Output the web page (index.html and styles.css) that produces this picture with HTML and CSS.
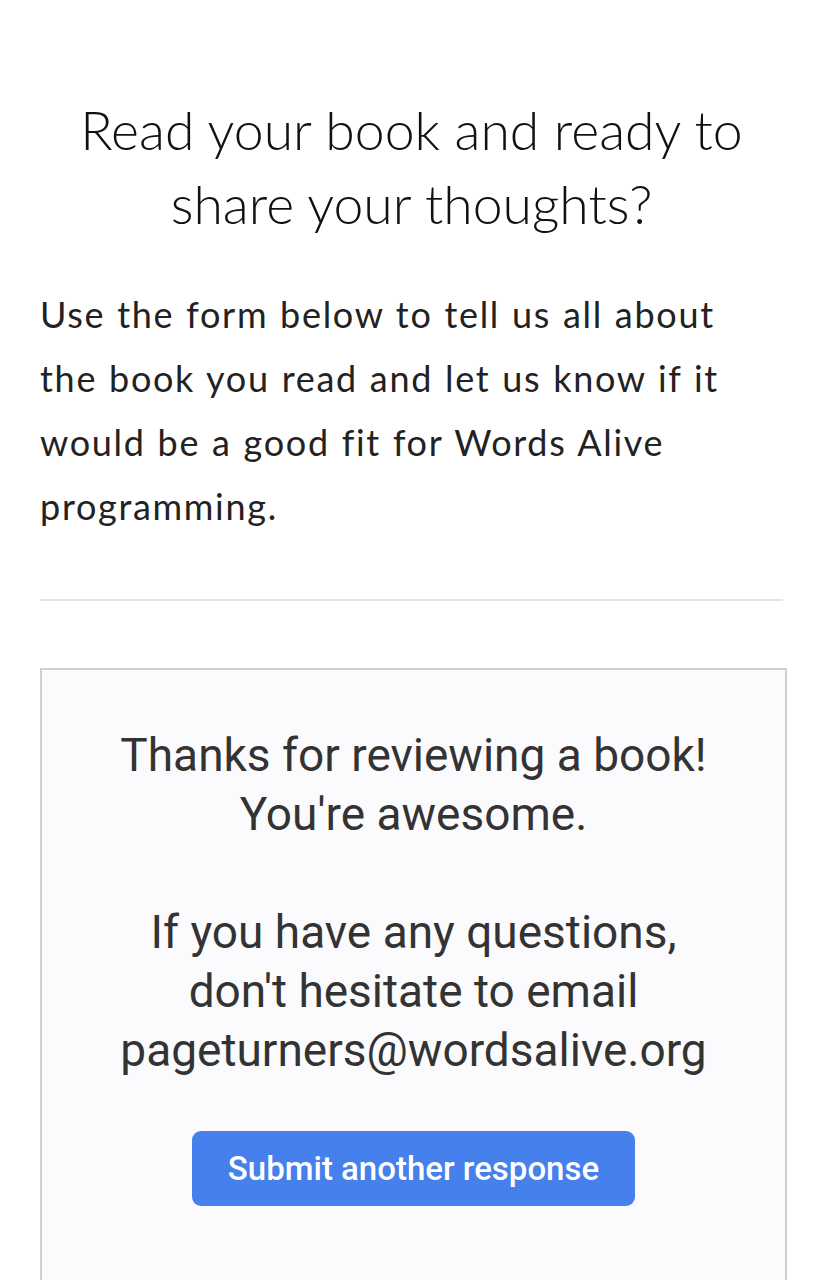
FILE: index.html
```html
<!DOCTYPE html>
<html lang="en">
<head>
<meta charset="utf-8">
<title>Share your thoughts</title>
<link rel="stylesheet" href="styles.css">
</head>
<body>
<main class="page">
  <h1 class="title">Read your book and ready to share your thoughts?</h1>
  <p class="intro">Use the form below to tell us all about the book you read and let us know if it would be a good fit for Words Alive programming.</p>
  <hr class="divider">
  <section class="card">
    <p class="msg">Thanks for reviewing a book!<br>You're awesome.</p>
    <p class="msg">If you have any questions, don't hesitate to email pageturners@wordsalive.org</p>
    <a class="btn" href="#">Submit another response</a>
  </section>
</main>
</body>
</html>
```

FILE: styles.css
```css
html, body {
  margin: 0;
  padding: 0;
  background: #ffffff;
  overflow: hidden;
}
.page {
  padding: 92px 40px 0 40px;
  display: flex;
  flex-direction: column;
}
.title {
  margin: 0;
  font-family: Lato, "Open Sans", sans-serif;
  font-weight: 300;
  font-size: 53.5px;
  line-height: 74px;
  text-align: center;
  color: #111;
  padding: 0 30px;
}
.intro {
  margin: 42px 0 0 0;
  max-width: 705px;
  font-family: Lato, "Open Sans", sans-serif;
  font-weight: 400;
  font-size: 36px;
  letter-spacing: 1.7px;
  word-spacing: 1px;
  line-height: 64px;
  color: #222;
}
.divider {
  margin: 61px 0 0 0;
  border: 0;
  height: 2px;
  background: #e2e2e2;
}
.card {
  margin-top: 67px;
  border: 2px solid #cfcfcf;
  border-bottom: 0;
  background: #fbfbfd;
  min-height: 612px;
  box-sizing: border-box;
  display: flex;
  flex-direction: column;
  align-items: center;
  padding: 56px 20px 0 20px;
  margin-right: -4px;
}
.msg {
  margin: 0 0 59px 0;
  font-family: Roboto, "Liberation Sans", sans-serif;
  font-size: 46px;
  line-height: 59px;
  text-align: center;
  color: #333333;
  max-width: 600px;
}
.msg + .msg {
  margin-bottom: 51px;
}
.btn {
  display: flex;
  align-items: center;
  justify-content: center;
  width: 443px;
  height: 75px;
  border-radius: 9px;
  background: #4580ec;
  color: #ffffff;
  text-decoration: none;
  font-family: Roboto, "Liberation Sans", sans-serif;
  font-weight: 500;
  font-size: 33px;
}
```
